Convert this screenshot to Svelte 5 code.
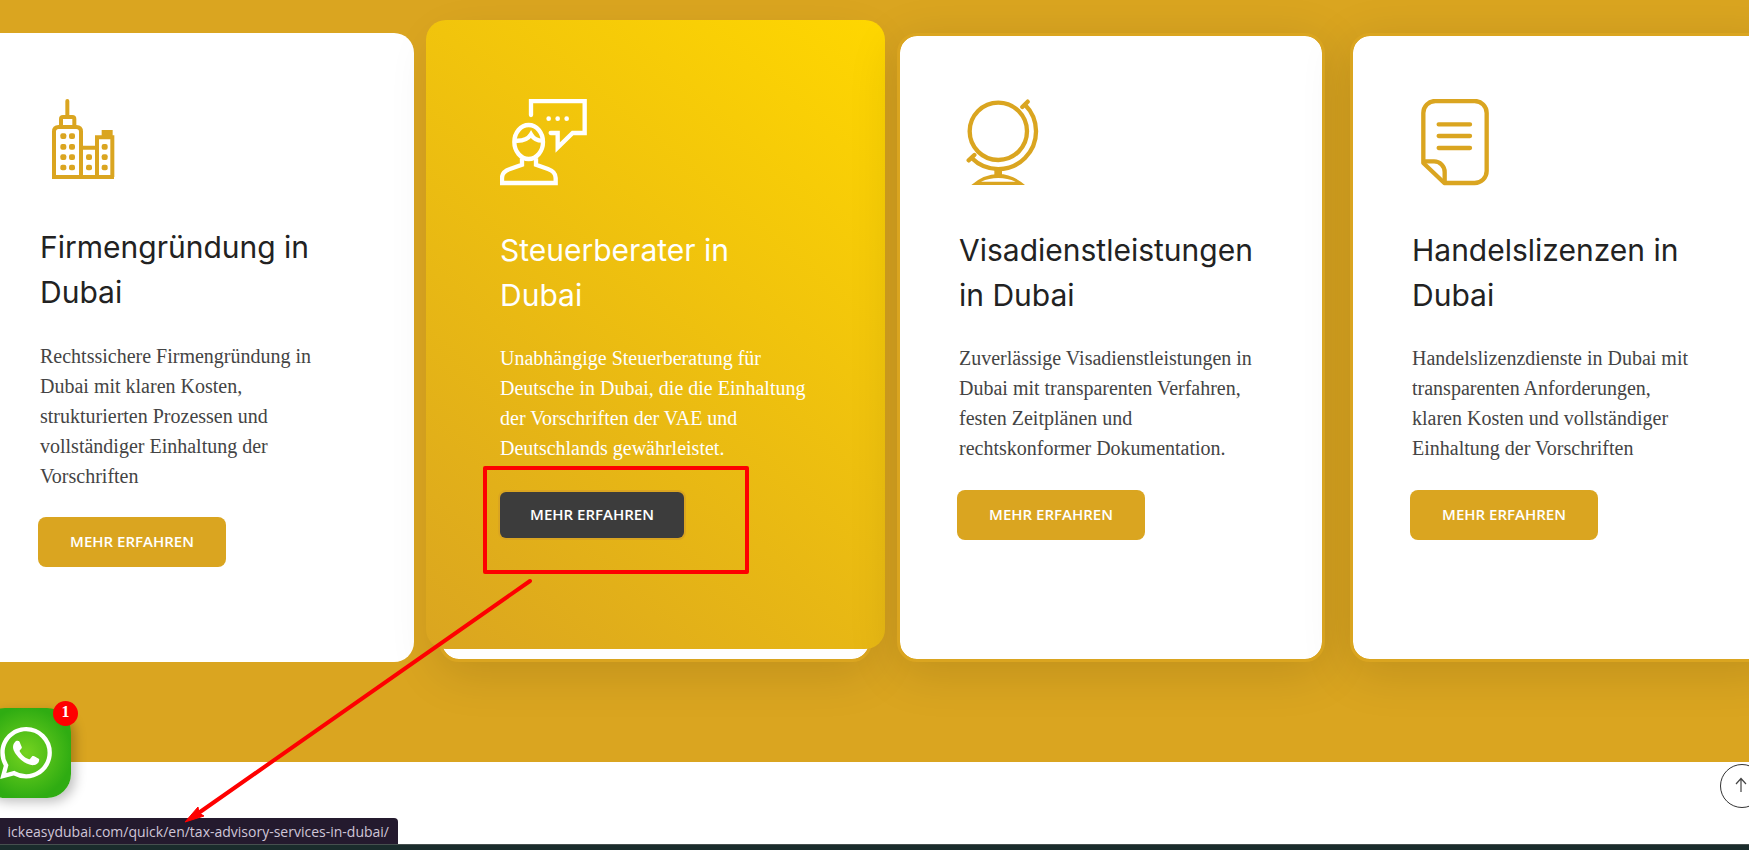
<script>
  const services = [
    {
      icon: 'city',
      variant: 'wide',
      title: 'Firmengründung in Dubai',
      text: 'Rechtssichere Firmengründung in Dubai mit klaren Kosten, strukturierten Prozessen und vollständiger Einhaltung der Vorschriften'
    },
    {
      icon: 'advisor',
      variant: 'active',
      title: 'Steuerberater in Dubai',
      text: 'Unabhängige Steuerberatung für Deutsche in Dubai, die die Einhaltung der Vorschriften der VAE und Deutschlands gewährleistet.'
    },
    {
      icon: 'globe',
      variant: 'plain',
      title: 'Visadienstleistungen in Dubai',
      text: 'Zuverlässige Visadienstleistungen in Dubai mit transparenten Verfahren, festen Zeitplänen und rechtskonformer Dokumentation.'
    },
    {
      icon: 'document',
      variant: 'plain',
      title: 'Handelslizenzen in Dubai',
      text: 'Handelslizenzdienste in Dubai mit transparenten Anforderungen, klaren Kosten und vollständiger Einhaltung der Vorschriften'
    }
  ];
</script>

{#snippet icon(name)}
  <svg class="icon" viewBox="0 0 261 261" fill="none" stroke="currentColor" stroke-width="13" aria-hidden="true">
    {#if name === 'city'}
      <g stroke-width="12">
        <path d="M82 6V50" stroke-linecap="round" />
        <path d="M63 82V60Q63 54 69 54H97Q103 54 103 60V82" />
        <path d="M42 234V98Q42 84 56 84H109Q123 84 123 98V234" />
        <path d="M123 146H171M171 234V115H217V234" />
        <path d="M36 234H222" />
      </g>
      <path d="M185 93H218V118H185Z" fill="currentColor" stroke="none" />
      <g fill="currentColor" stroke="none">
        {#each [[70, 111], [96, 111], [70, 143], [96, 143], [70, 174], [96, 174], [70, 205], [96, 205], [147, 174], [147, 205], [194, 143], [194, 174], [194, 205]] as [x, y]}
          <rect x={x - 9} y={y - 8} width="18" height="17" rx="6" />
        {/each}
      </g>
    {:else if name === 'advisor'}
      <path d="M93 48V6H254V102H218L173 146V102H152" stroke-linecap="round" />
      <g fill="currentColor" stroke="none">
        <circle cx="146" cy="59" r="7" />
        <circle cx="173" cy="59" r="7" />
        <circle cx="200" cy="59" r="7" />
      </g>
      <ellipse cx="86" cy="129" rx="43" ry="51" />
      <path d="M46 125Q80 127 93 106Q104 125 127 125" />
      <path d="M66 178V197L30 210Q6 218 6 237V252H167V237Q167 218 144 210L108 197V178" />
    {:else if name === 'globe'}
      <circle cx="118" cy="97" r="86" />
      <path d="M198 17A113 113 0 0 1 38 177" />
      <path d="M190 24L206 8M29 184L46 168" stroke-linecap="round" />
      <path d="M106 205H129V228H106Z" fill="currentColor" stroke="none" />
      <path fill-rule="evenodd" fill="currentColor" stroke="none" d="M37 258Q75 225 118 225Q160 225 198 258ZM66 248H170Q145 237 118 237Q90 237 66 248Z" />
    {:else}
      <path d="M34 192V42A36 36 0 0 1 70 6H188A36 36 0 0 1 224 42V216A36 36 0 0 1 188 252H97Z" stroke-linejoin="round" />
      <path d="M34 187H66A32 32 0 0 1 98 219V252" />
      <path d="M80 76H174M80 111H174M80 147H174" stroke-linecap="round" />
    {/if}
  </svg>
{/snippet}

{#snippet body(service)}
  {@render icon(service.icon)}
  <h3>{service.title}</h3>
  <p>{service.text}</p>
  <a class="more" href="#{service.icon}">MEHR ERFAHREN</a>
{/snippet}

<div class="page">
  <section class="services">
    <div class="track">
      {#each services as service}
        <article class="card {service.variant}">
          {#if service.variant === 'active'}
            <div class="panel">{@render body(service)}</div>
          {:else}
            {@render body(service)}
          {/if}
        </article>
      {/each}
    </div>
  </section>

  <div class="strip">
    <button class="to-top" aria-label="Nach oben">
      <svg viewBox="1 1 42 42" width="42" height="42" fill="none" stroke="#444" stroke-width="1.2" aria-hidden="true">
        <path d="M21 28V14.500M16 20L21 14.500L26 20" />
      </svg>
    </button>
  </div>
  <footer></footer>

  <button class="whatsapp" aria-label="WhatsApp">
    <svg viewBox="0 0 24 24" width="52" height="52" fill="#fff" aria-hidden="true">
      <path d="M17.472 14.382c-.297-.149-1.758-.867-2.030-.967-.273-.099-.471-.148-.670.150-.197.297-.767.966-.940 1.164-.173.199-.347.223-.644.075-.297-.150-1.255-.463-2.390-1.475-.883-.788-1.480-1.761-1.653-2.059-.173-.297-.018-.458.130-.606.134-.133.298-.347.446-.520.149-.174.198-.298.298-.497.099-.198.050-.371-.025-.520-.075-.149-.669-1.612-.916-2.207-.242-.579-.487-.500-.669-.510-.173-.008-.371-.010-.570-.010-.198 0-.520.074-.792.372-.272.297-1.040 1.016-1.040 2.479 0 1.462 1.065 2.875 1.213 3.074.149.198 2.096 3.200 5.077 4.487.709.306 1.262.489 1.694.625.712.227 1.360.195 1.871.118.571-.085 1.758-.719 2.006-1.413.248-.694.248-1.289.173-1.413-.074-.124-.272-.198-.570-.347m-5.421 7.403h-.004a9.870 9.870 0 01-5.031-1.378l-.361-.214-3.741.982.998-3.648-.235-.374a9.860 9.860 0 01-1.510-5.260c.001-5.450 4.436-9.884 9.888-9.884 2.640 0 5.122 1.030 6.988 2.898a9.825 9.825 0 012.893 6.994c-.003 5.450-4.437 9.884-9.885 9.884m8.413-18.297A11.815 11.815 0 0012.050 0C5.495 0 .160 5.335.157 11.892c0 2.096.547 4.142 1.588 5.945L.057 24l6.305-1.654a11.882 11.882 0 005.683 1.448h.005c6.554 0 11.890-5.335 11.893-11.893a11.821 11.821 0 00-3.480-8.413z" />
    </svg>
    <span class="count">1</span>
  </button>

  <div class="status">ickeasydubai.com/quick/en/tax-advisory-services-in-dubai/</div>

  <svg class="markup" width="760" height="840" viewBox="0 0 760 840" fill="none" stroke="#fe0000" stroke-width="4" aria-hidden="true">
    <rect x="485" y="468" width="262" height="104" stroke-linejoin="round" />
    <path d="M530 581L200 812" stroke-linecap="round" />
    <path d="M185 822L198 807L199 813L204 816Z" fill="#fe0000" stroke-width="1" />
  </svg>
</div>

<style>
  :global(body) {
    margin: 0;
    background: #fff;
  }

  .page {
    position: relative;
    display: flex;
    flex-direction: column;
    min-height: 100vh;
    overflow: hidden;
    font-family: 'Liberation Serif', serif;
  }

  .services {
    padding: 33px 0 100px;
    background: #daa520;
  }

  .track {
    display: grid;
    grid-template-columns: minmax(0, 459fr) minmax(0, 433fr) repeat(2, minmax(0, 428fr));
    gap: 25px;
    margin: 0 -29px 0 -45px;
  }

  .card {
    position: relative;
    padding: 63px 59px;
    border: 3px solid #daa520;
    border-radius: 20px;
    background: #fff;
    background-clip: padding-box;
    box-shadow: 0 10px 50px rgba(0, 0, 0, 0.13);
    color: #222;
  }

  .card:last-child {
    padding-right: 72px;
  }

  .wide {
    padding: 66px 85px 97px;
    border: 0;
    box-shadow: none;
  }

  .panel {
    position: absolute;
    inset: -16px -16px 10px;
    padding: 79px 74px;
    border-radius: 20px;
    background: linear-gradient(220deg, #ffd700, #daa520);
    color: #fff;
  }

  .icon {
    display: block;
    width: 87px;
    height: 87px;
    color: #daa520;
  }

  .panel .icon {
    color: #fff;
  }

  h3 {
    margin: 42px 0 25px;
    font: 400 30px/45px Inter, sans-serif;
  }

  .wide h3 {
    margin: 39px 0 26px;
  }

  p {
    margin: 0 0 29px;
    font-size: 20px;
    line-height: 30px;
    color: #444;
  }

  .wide p {
    margin-bottom: 28px;
  }

  .panel p {
    color: #fff;
  }

  .more {
    display: flex;
    align-items: center;
    justify-content: center;
    box-sizing: border-box;
    width: 184px;
    height: 46px;
    padding-bottom: 2px;
    border-radius: 6px;
    background: #daa520;
    box-shadow: 0 0 0 2px #daa520;
    color: #fff;
    font: 600 15px/20px 'Open Sans', sans-serif;
    text-decoration: none;
  }

  .panel .more {
    background: #3c3c3c;
  }

  .strip {
    position: relative;
    height: 82px;
  }

  .to-top {
    position: absolute;
    top: 2px;
    right: -15px;
    box-sizing: border-box;
    display: grid;
    place-items: center;
    width: 44px;
    height: 44px;
    padding: 0;
    border: 1px solid #333;
    border-radius: 50%;
    background: #fff;
  }

  footer {
    flex: 1;
    min-height: 5px;
    border-top: 1px solid #46504f;
    background: #1a2c2c;
  }

  .whatsapp {
    position: absolute;
    left: -19px;
    bottom: 52px;
    display: grid;
    place-items: center;
    width: 90px;
    height: 90px;
    padding: 0;
    border: 0;
    border-radius: 24px;
    background: radial-gradient(circle, #75d320 0%, #2fac12 72%);
    box-shadow: 4px 4px 12px rgba(0, 0, 0, 0.25);
  }

  .count {
    position: absolute;
    top: -7px;
    right: -7px;
    width: 25px;
    height: 25px;
    border-radius: 50%;
    background: #fe0000;
    color: #fff;
    font: 700 16px/22px 'Liberation Serif', serif;
    text-align: center;
  }

  .status {
    position: absolute;
    left: 0;
    bottom: 6px;
    box-sizing: border-box;
    min-width: 398px;
    padding: 2px 9px 0 0;
    border-radius: 0 4px 0 0;
    background: #241a2e;
    color: #cfc6d8;
    font: 400 14px/24px 'Open Sans', sans-serif;
    text-align: right;
    white-space: nowrap;
  }

  .markup {
    position: absolute;
    left: 0;
    top: 0;
    pointer-events: none;
  }
</style>
